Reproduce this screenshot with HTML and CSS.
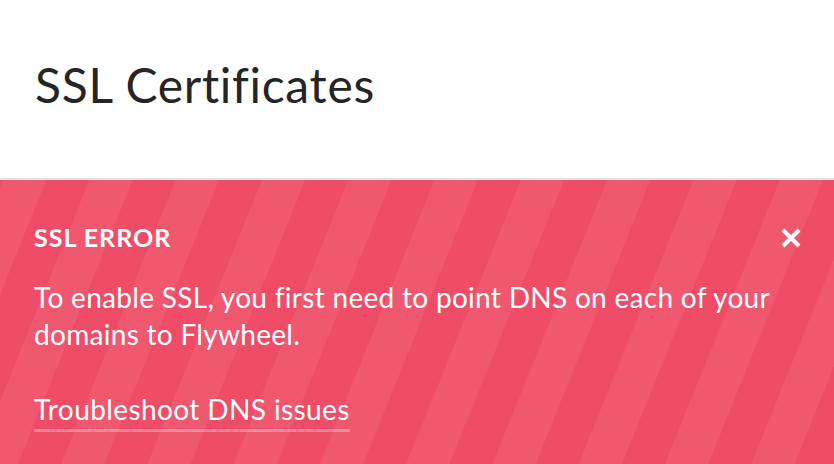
FILE: index.html
```html
<!DOCTYPE html>
<html lang="en">
<head>
	<meta charset="UTF-8">
	<title>SSL Certificates</title>
	<link rel="stylesheet" href="styles.css">
</head>
<body>
	<div class="page-head">
		<h1>SSL Certificates</h1>
	</div>
	<div class="alert">
		<div class="alert-top">
			<h2>SSL ERROR</h2>
			<button class="close" type="button" aria-label="Close">
				<svg width="20" height="20" viewBox="0 0 20 20">
					<path d="M2 2 L18 18 M18 2 L2 18" stroke="#fff" stroke-width="4" fill="none"/>
				</svg>
			</button>
		</div>
		<p>To enable SSL, you first need to point DNS on each of your domains to Flywheel.</p>
		<a href="#" class="alert-link">Troubleshoot DNS issues</a>
	</div>
</body>
</html>
```

FILE: styles.css
```css
* { margin: 0; padding: 0; box-sizing: border-box; }
body {
	background-color: #fff;
	font-family: Lato, "Open Sans", sans-serif;
	overflow: hidden;
}
.page-head {
	height: 180px;
	padding: 56px 0 0 35px;
	border-bottom: 2px solid #e3e3e3;
}
.page-head h1 {
	font-size: 48px;
	font-weight: 400;
	line-height: 58px;
	letter-spacing: 0.7px;
	color: #252525;
}
.alert {
	height: 284px;
	padding: 43px 33px 0 34px;
	color: #fff;
	background: repeating-linear-gradient(112deg, #ef4d67 0 3px, #f05870 3px 43px, #ef4d67 43px 80px);
}
.alert-top {
	display: flex;
	justify-content: space-between;
	align-items: center;
}
.alert-top h2 {
	font-size: 25px;
	font-weight: 700;
	line-height: 29px;
	letter-spacing: 1px;
}
.close {
	border: none;
	background: none;
	width: 20px;
	height: 20px;
	cursor: pointer;
}
.close svg { display: block; }
.alert p {
	margin-top: 27px;
	font-size: 28px;
	line-height: 37px;
	letter-spacing: 0.3px;
	max-width: 760px;
}
.alert-link {
	display: inline-block;
	margin-top: 38px;
	font-size: 28px;
	line-height: 37px;
	letter-spacing: 0.4px;
	padding-bottom: 1px;
	color: #fff;
	text-decoration: none;
	border-bottom: 3px solid rgba(255, 255, 255, 0.3);
}
```
